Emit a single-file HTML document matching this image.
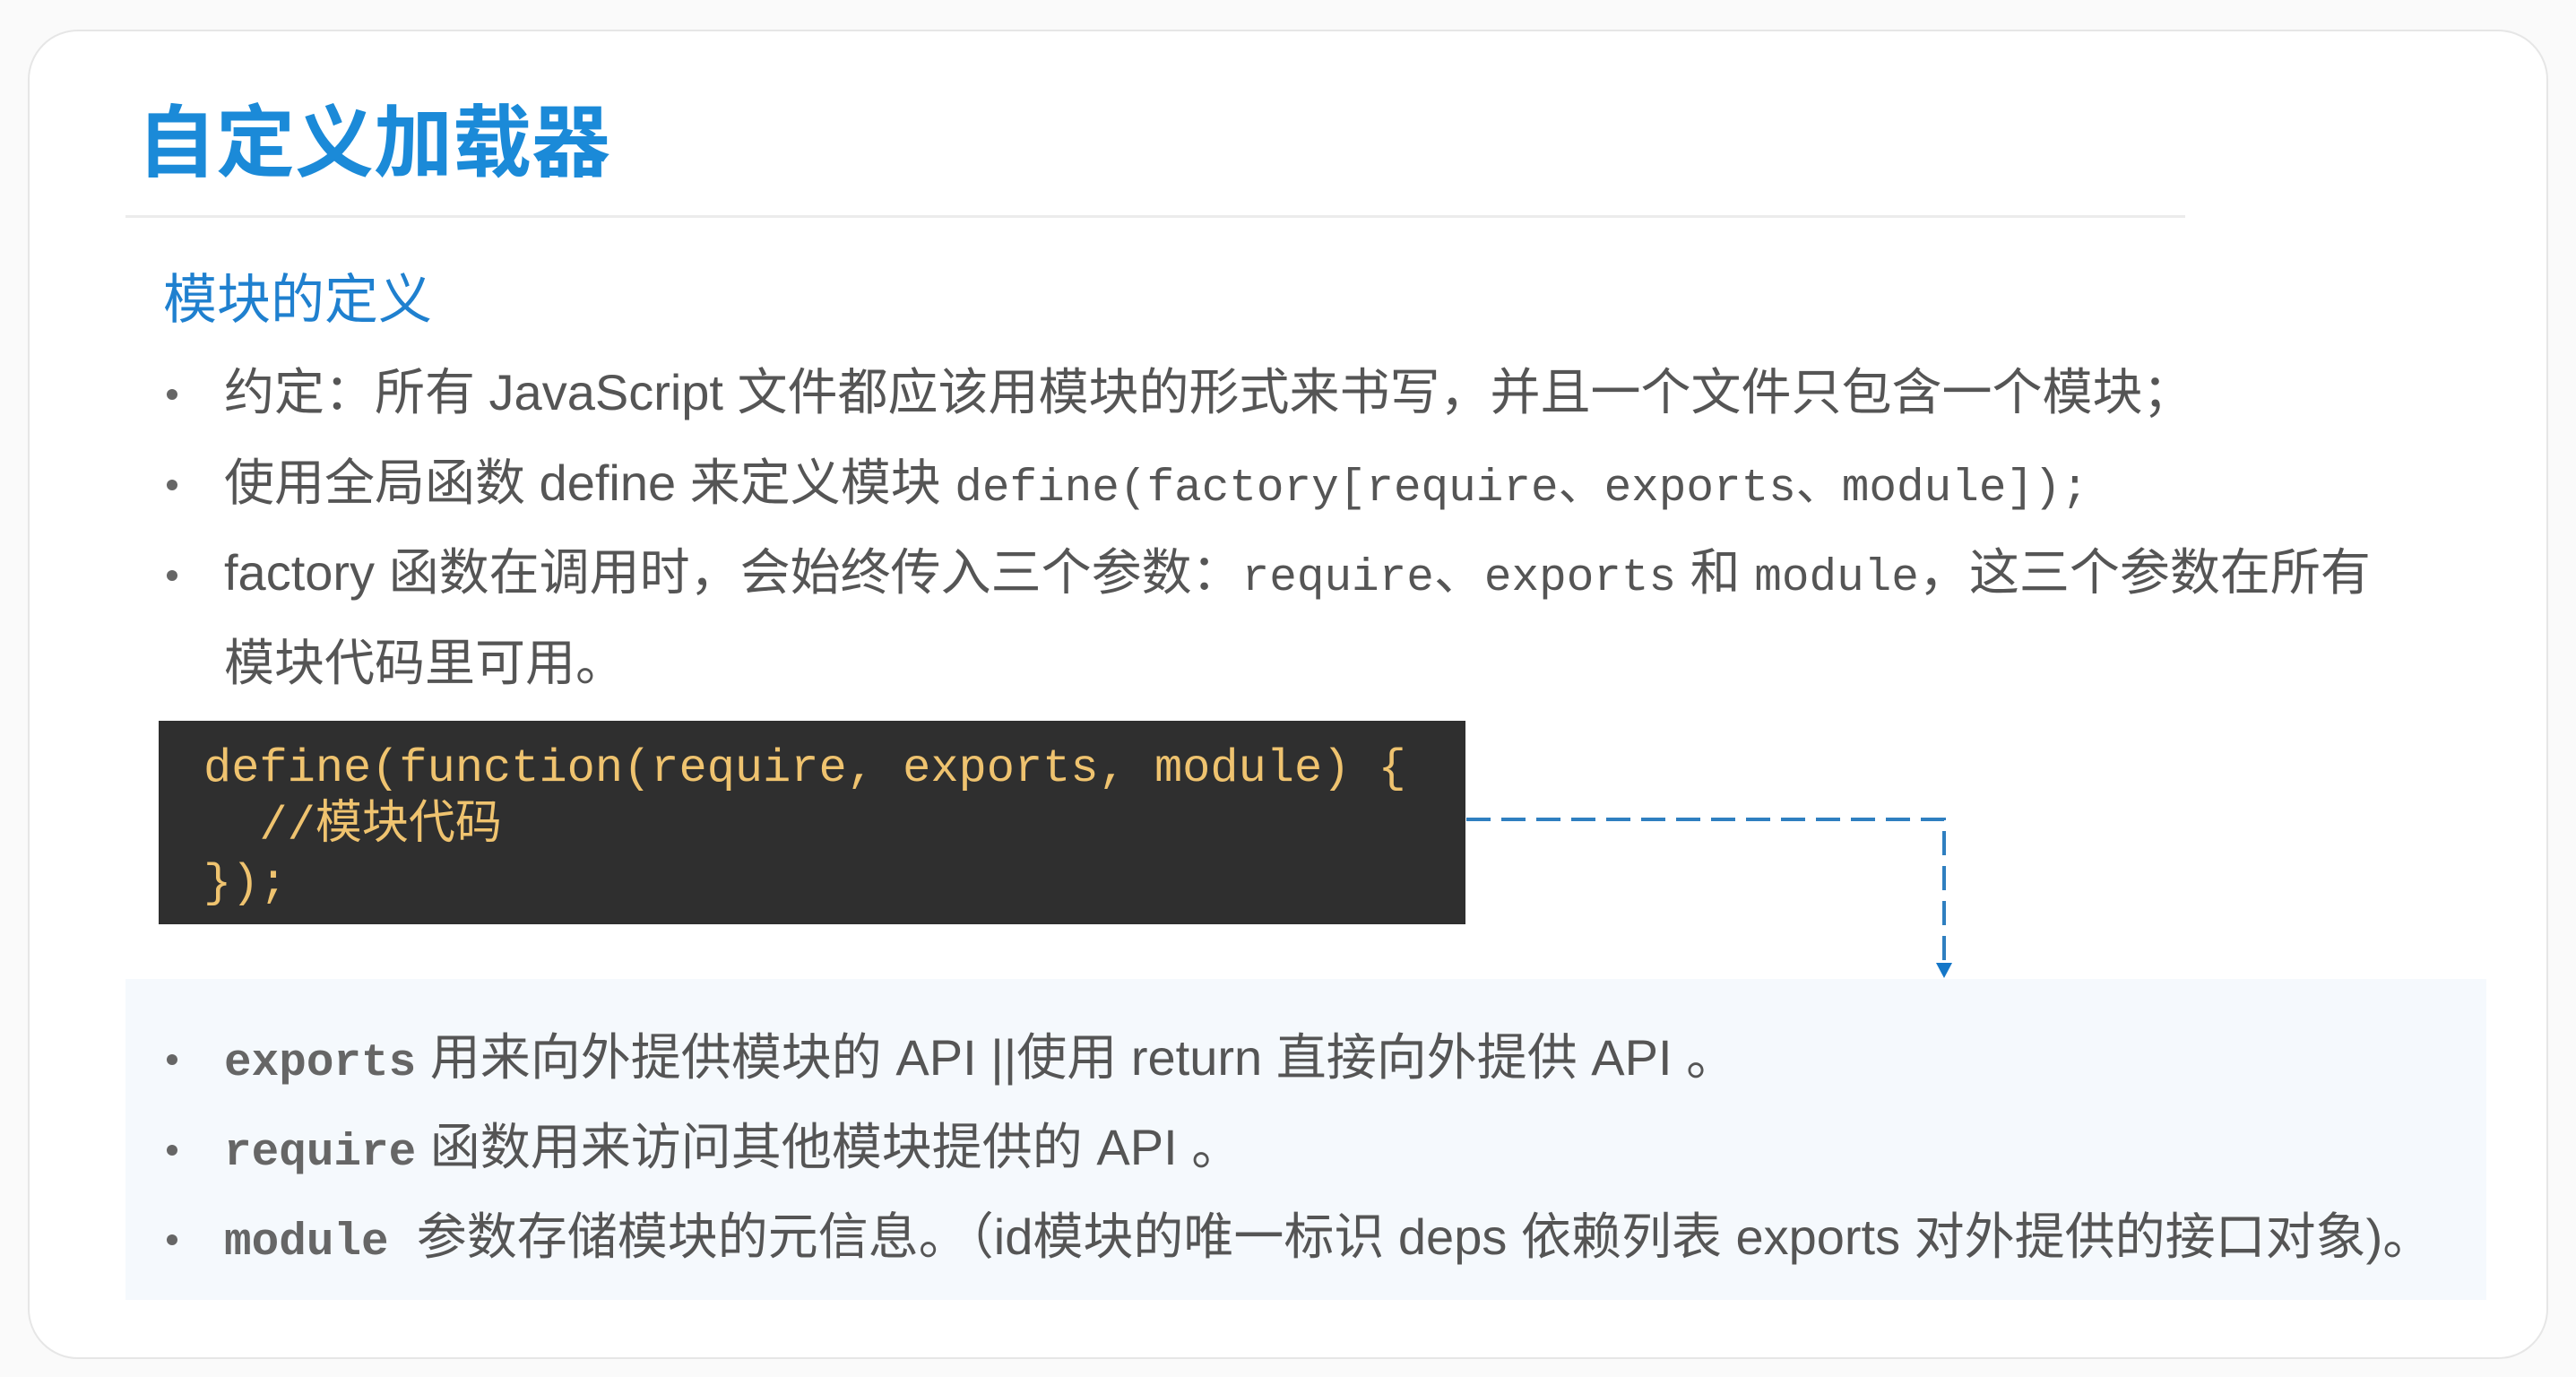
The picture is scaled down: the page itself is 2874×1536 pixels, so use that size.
<!DOCTYPE html>
<html><head><meta charset="utf-8"><style>
*{margin:0;padding:0;box-sizing:border-box}
body{width:2874px;height:1536px;background:#fafafa;position:relative;overflow:hidden;font-family:"Liberation Sans","Noto Sans CJK SC",sans-serif}
.card{position:absolute;left:31px;top:33px;width:2814px;height:1483px;background:#fff;border:2px solid #e6e6e6;border-radius:56px}
.t{position:absolute;white-space:nowrap}
.title{left:153px;top:100px;font-size:88px;font-weight:bold;color:#1b8ad8;line-height:120px}
.hr{position:absolute;left:140px;top:240px;width:2298px;height:3px;background:#ececec}
.sub{left:182px;top:295px;font-size:60px;color:#1f80cf;line-height:80px}
.li{font-size:56px;color:#555;line-height:80px}
.dot{position:absolute;width:12px;height:12px;border-radius:50%;background:#666}
.mono{font-family:"Liberation Mono","Noto Sans CJK SC",monospace;font-size:51px}
.code{position:absolute;left:177px;top:804px;width:1458px;height:227px;background:#2f2f2f}
.cl{position:absolute;left:50px;color:#efc36f;font-family:"Liberation Mono","Noto Sans CJK SC",monospace;font-size:52px;line-height:64px;white-space:pre}
.box{position:absolute;left:140px;top:1092px;width:2636px;height:358px;background:#f5f9fd}
</style></head><body>
<div class="card" style="width:2812px"></div>
<div class="t title">自定义加载器</div>
<div class="hr"></div>
<div class="t sub">模块的定义</div>

<div class="dot" style="left:186px;top:434px"></div>
<div class="t li" style="left:250px;top:398px">约定：所有 JavaScript 文件都应该用模块的形式来书写，并且一个文件只包含一个模块；</div>
<div class="dot" style="left:186px;top:535px"></div>
<div class="t li" style="left:250px;top:499px">使用全局函数 define 来定义模块 <span class="mono">define(factory[require、exports、module]);</span></div>
<div class="dot" style="left:186px;top:636px"></div>
<div class="t li" style="left:250px;top:599px">factory 函数在调用时，会始终传入三个参数：<span class="mono">require</span>、<span class="mono">exports</span> 和 <span class="mono">module</span>，这三个参数在所有</div>
<div class="t li" style="left:250px;top:700px">模块代码里可用。</div>

<div class="code">
<div class="cl" style="top:22px">define(function(require, exports, module) {</div>
<div class="cl" style="top:86px">  //模块代码</div>
<div class="cl" style="top:150px">});</div>
</div>

<svg style="position:absolute;left:0;top:0" width="2874" height="1536">
<path d="M1636 914 H2169 V1072" fill="none" stroke="#2f7fc0" stroke-width="4" stroke-dasharray="27 12"/>
<path d="M2160 1074 L2178 1074 L2169 1091 Z" fill="#1577c8"/>
</svg>

<div class="box" style="width:2634px"></div>
<div class="dot" style="left:186px;top:1176px"></div>
<div class="t li" style="left:250px;top:1140px"><span class="mono" style="font-weight:bold;color:#666">exports</span> 用来向外提供模块的 API ||使用 return 直接向外提供 API 。</div>
<div class="dot" style="left:186px;top:1277px"></div>
<div class="t li" style="left:250px;top:1240px"><span class="mono" style="font-weight:bold;color:#666">require</span> 函数用来访问其他模块提供的 API 。</div>
<div class="dot" style="left:186px;top:1377px"></div>
<div class="t li" style="left:250px;top:1340px"><span class="mono" style="font-weight:bold;color:#666">module</span>&nbsp; 参数存储模块的元信息。（id模块的唯一标识 deps 依赖列表 exports 对外提供的接口对象)。</div>
</body></html>
